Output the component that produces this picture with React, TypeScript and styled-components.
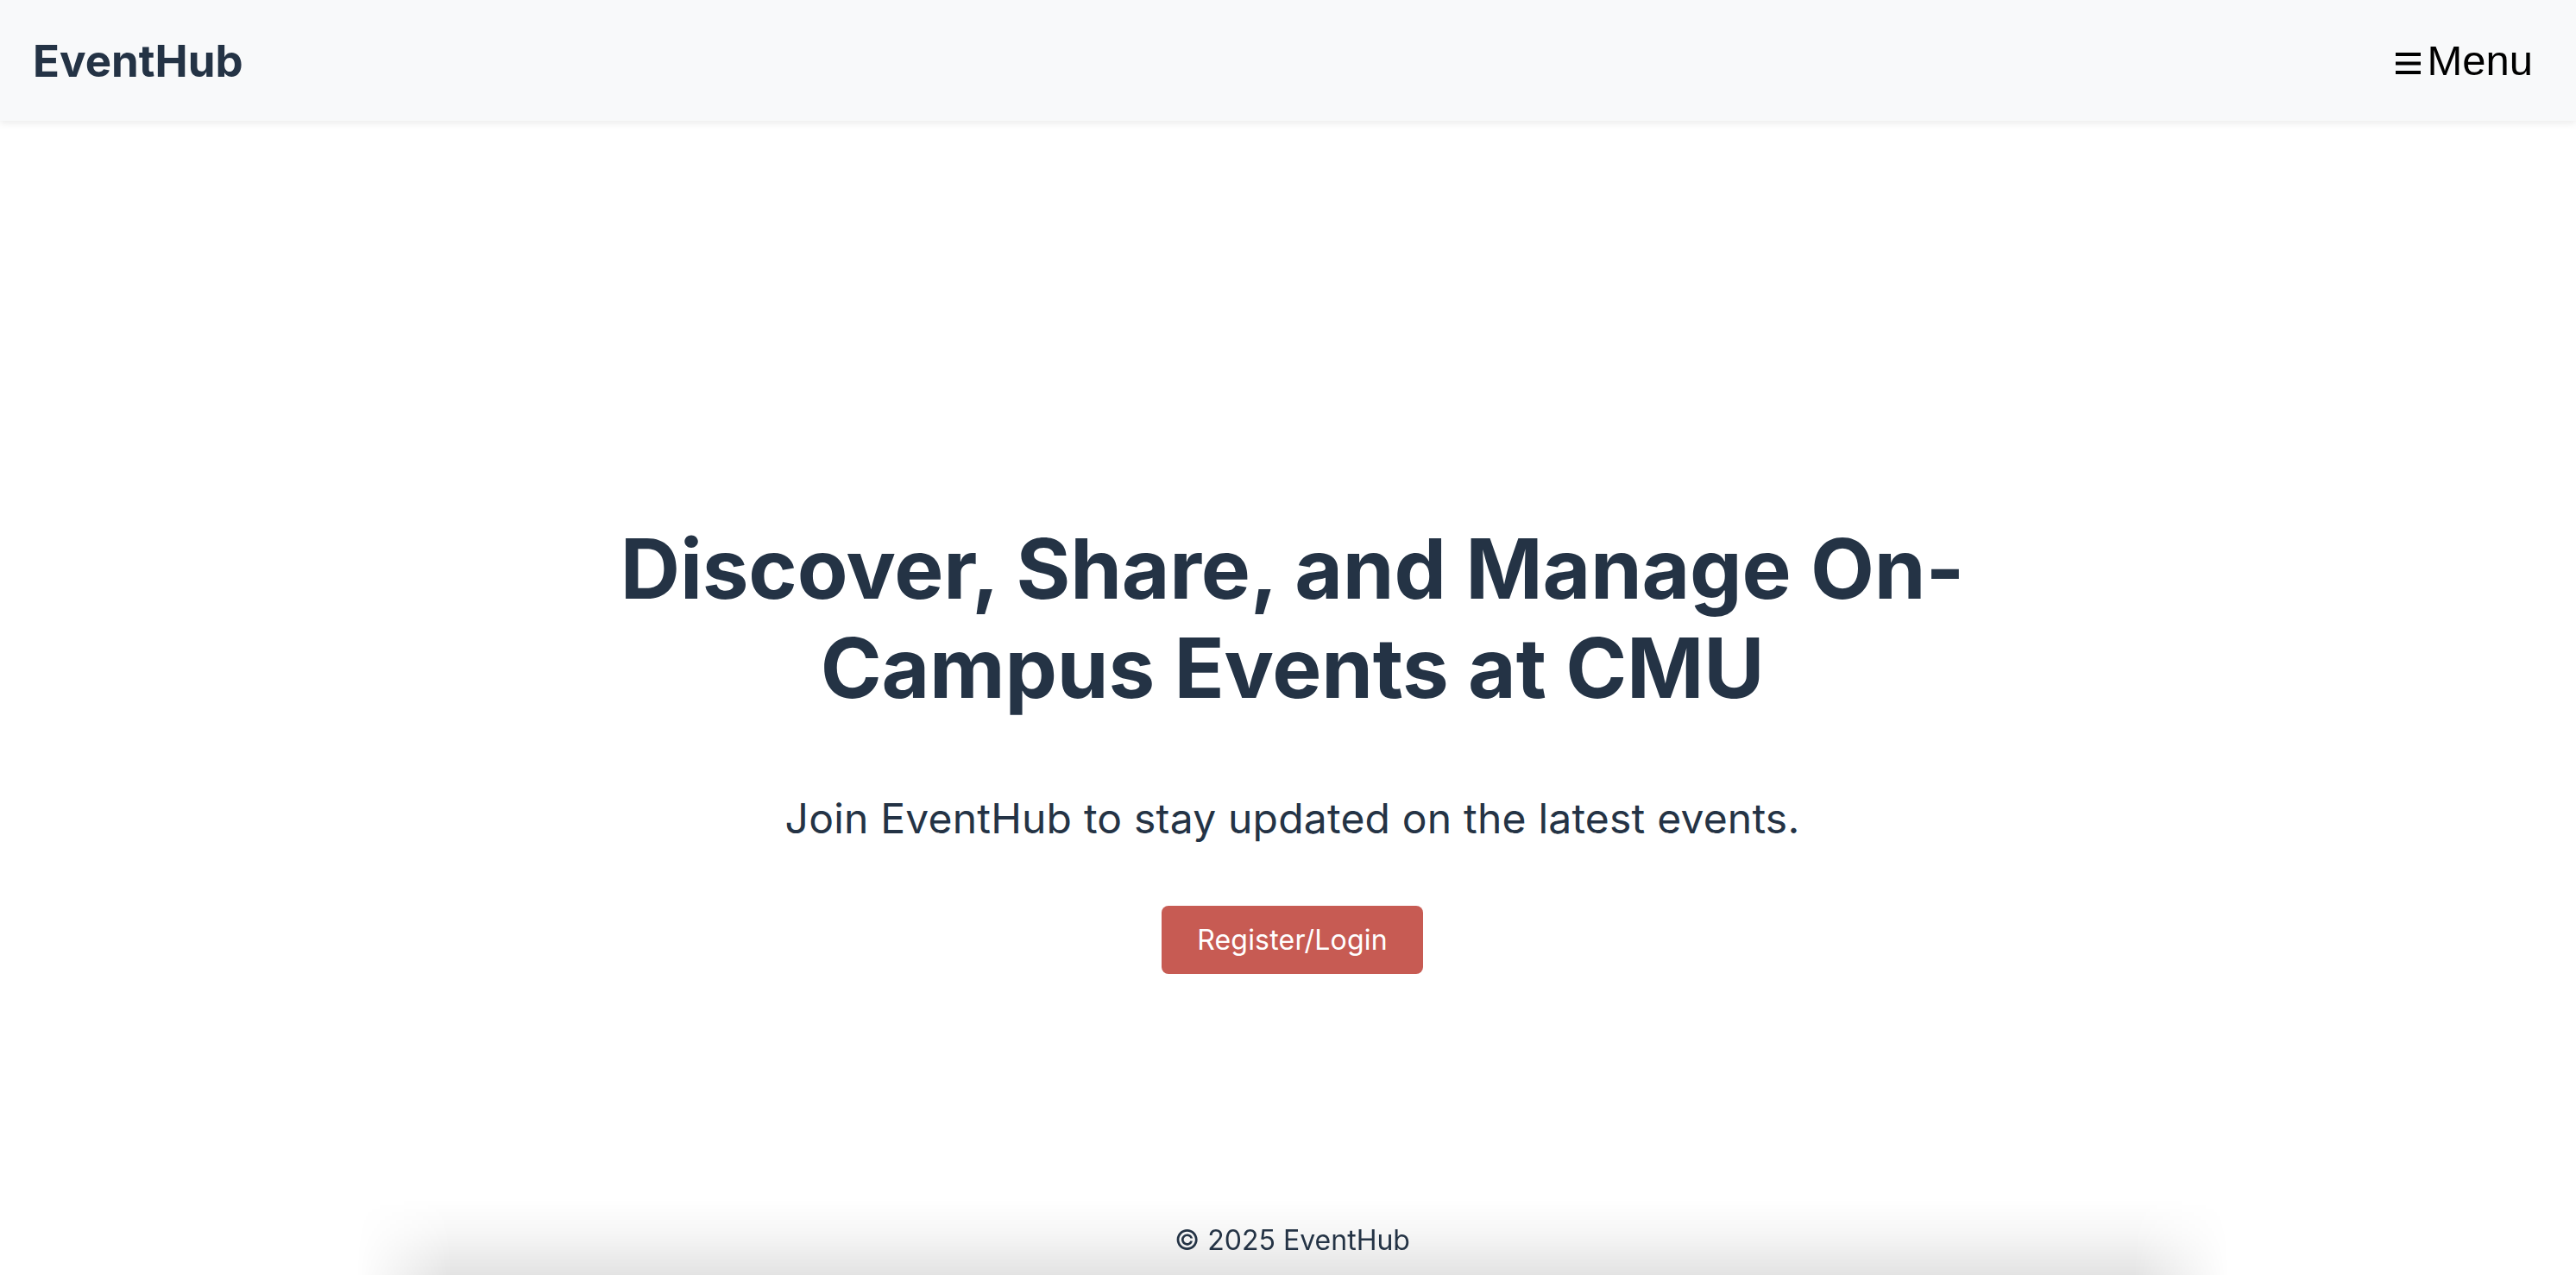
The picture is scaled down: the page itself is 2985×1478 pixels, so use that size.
import styled, { createGlobalStyle } from 'styled-components'

const GlobalStyle = createGlobalStyle`
    * {
        box-sizing: border-box;
    }

    body {
        margin: 0;
        background: #ffffff;
        font-family: Inter, 'Noto Sans', 'Liberation Sans', sans-serif;
        color: #243345;
    }
`

const StyledPage = styled.div`
    min-height: 100vh;
    display: flex;
    flex-direction: column;
`

const StyledNavbar = styled.header`
    height: 140px;
    padding: 0 50px 0 38px;
    display: flex;
    align-items: center;
    justify-content: space-between;
    background: #f8f9fa;
    box-shadow: 0 3px 8px rgba(0, 0, 0, 0.08);
    position: relative;
    z-index: 1;
`

const StyledBrand = styled.a`
    font-size: 51px;
    font-weight: 700;
    color: #243345;
    text-decoration: none;
`

/* the button keeps a plain system face, not the page font */
const StyledMenuButton = styled.button`
    display: flex;
    align-items: center;
    gap: 7px;
    padding: 0;
    border: none;
    background: none;
    font-family: 'Liberation Sans', Arial, sans-serif;
    font-size: 49px;
    color: #000;
    cursor: pointer;

    svg {
        margin-top: 8px;
    }
`

const StyledHero = styled.main`
    flex: 1;
    display: flex;
    flex-direction: column;
    align-items: center;
    padding: 462px 0 0 10px;
    text-align: center;
`

const StyledTitle = styled.h1`
    margin: 0;
    max-width: 1620px;
    font-size: 96px;
    line-height: 1.2;
    font-weight: 700;
    letter-spacing: -0.2px;
    color: #243345;
`

const StyledLead = styled.p`
    margin: 81px 0 0;
    font-size: 48px;
    line-height: 1.5;
    font-weight: 400;
    letter-spacing: 0.2px;
    color: #243345;
`

const StyledButton = styled.button`
    margin-top: 65px;
    height: 79px;
    padding: 0 41px;
    border: none;
    border-radius: 8px;
    background: #c75b53;
    color: #fff;
    font-family: inherit;
    font-size: 32px;
    letter-spacing: 0.2px;
    cursor: pointer;
`

const StyledFooter = styled.footer`
    height: 88px;
    display: flex;
    justify-content: center;
    padding-left: 10px;
`

const StyledFooterBand = styled.div`
    width: 2170px;
    height: 100%;
    display: flex;
    align-items: center;
    justify-content: center;
    padding-top: 6px;
    background: linear-gradient(
        to bottom,
        rgba(0, 0, 0, 0) 0%,
        rgba(0, 0, 0, 0.035) 45%,
        rgba(0, 0, 0, 0.11) 100%
    );
    -webkit-mask-image: linear-gradient(
        to right,
        transparent 0,
        #000 110px,
        #000 calc(100% - 110px),
        transparent 100%
    );
    mask-image: linear-gradient(
        to right,
        transparent 0,
        #000 110px,
        #000 calc(100% - 110px),
        transparent 100%
    );
    font-size: 32px;
    color: #243345;
`

function MenuIcon() {
    return (
        <svg width='29' height='26' viewBox='0 0 29 26' aria-hidden='true'>
            <rect x='0' y='0' width='29' height='4' fill='#000' />
            <rect x='0' y='10.5' width='29' height='4' fill='#000' />
            <rect x='0' y='21' width='29' height='4' fill='#000' />
        </svg>
    )
}

function App() {
    return (
        <>
            <GlobalStyle />
            <StyledPage>
                <StyledNavbar>
                    <StyledBrand href='#'>EventHub</StyledBrand>
                    <StyledMenuButton>
                        <MenuIcon />
                        Menu
                    </StyledMenuButton>
                </StyledNavbar>

                <StyledHero>
                    <StyledTitle>
                        Discover, Share, and Manage On-Campus Events at CMU
                    </StyledTitle>
                    <StyledLead>
                        Join EventHub to stay updated on the latest events.
                    </StyledLead>
                    <StyledButton>Register/Login</StyledButton>
                </StyledHero>

                <StyledFooter>
                    <StyledFooterBand>© 2025 EventHub</StyledFooterBand>
                </StyledFooter>
            </StyledPage>
        </>
    )
}

export default App
